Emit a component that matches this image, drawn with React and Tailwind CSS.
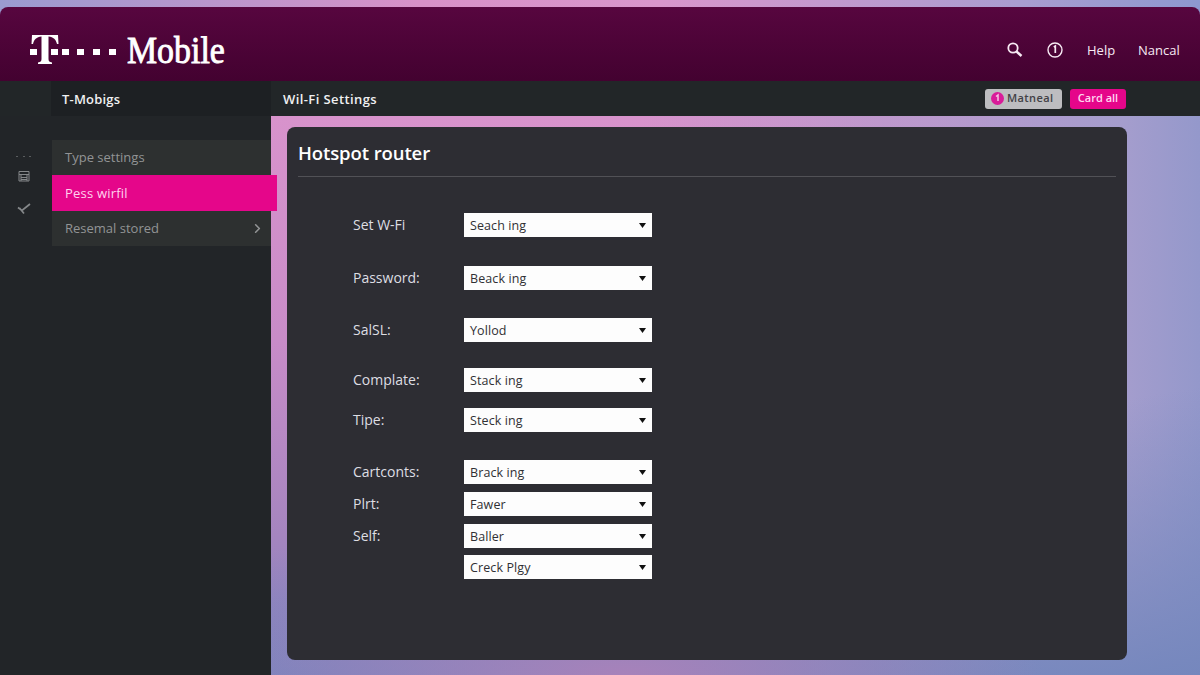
import { ChevronRight } from "lucide-react";

const navItems = [
  { label: "Type settings" },
  { label: "Pess wirfil", active: true },
  { label: "Resemal stored", arrow: true },
];

const fields = [
  { label: "Set W-Fi", value: "Seach ing", gap: "mt-0" },
  { label: "Password:", value: "Beack ing", gap: "mt-[29px]" },
  { label: "SalSL:", value: "Yollod", gap: "mt-7" },
  { label: "Complate:", value: "Stack ing", gap: "mt-[26px]" },
  { label: "Tipe:", value: "Steck ing", gap: "mt-4" },
  { label: "Cartconts:", value: "Brack ing", gap: "mt-7" },
  { label: "Plrt:", value: "Fawer", gap: "mt-2" },
  { label: "Self:", value: "Baller", gap: "mt-2" },
  { label: "", value: "Creck Plgy", gap: "mt-[7px]" },
];

function Logo() {
  return (
    <div className="flex items-center text-white">
      <svg width="88" height="30" viewBox="0 0 88 30" fill="currentColor">
        <path d="M2 0H28L28.500 9H27C26 4.500 23.500 2 18.500 1.500V24C18.500 26.500 19.500 27 22 27.500V29H8V27.500C10.500 27 11.500 26.500 11.500 24V1.500C6.500 2 4 4.500 3 9H1.500Z" />
        <path d="M0 14h7v6H0zM21 14h7v6h-7zM32 14h7v6h-7zM47 14h7v6h-7zM63 14h7v6h-7zM79 14h7v6h-7z" />
      </svg>
      <span className="ml-[9px] origin-left scale-x-[0.88] font-['Liberation_Serif',serif] text-[38.5px] leading-[50px] [-webkit-text-stroke:0.9px_white]">Mobile</span>
    </div>
  );
}

function Header() {
  return (
    <header className="h-[74px] shrink-0 rounded-t-lg bg-gradient-to-b from-[#57063f] to-[#430230] flex items-center justify-between pl-[30px] pr-[19px] pt-3">
      <Logo />
      <div className="flex items-center text-[#f7eaf3] text-[13px] font-medium">
        <svg width="16" height="16" viewBox="0 0 16 16" fill="none" stroke="currentColor" className="mr-6">
          <circle cx="6" cy="6" r="4.700" strokeWidth="1.800" />
          <path d="M9.500 9.500L14.500 14" strokeWidth="2.400" />
        </svg>
        <svg width="16" height="16" viewBox="0 0 16 16" fill="none" stroke="currentColor" strokeWidth="1.400" className="mr-6">
          <circle cx="8" cy="8" r="7" />
          <path d="M6.800 5L8.300 4V11" strokeWidth="1.700" />
        </svg>
        <span className="w-[51px] pt-0.5">Help</span>
        <span className="w-[43px] pt-0.5">Nancal</span>
      </div>
    </header>
  );
}

function Sidebar() {
  return (
    <aside className="w-[271px] shrink-0 flex bg-[#222528]">
      <div className="w-[52px] shrink-0 pt-10 flex flex-col items-center text-[#85888a]">
        <svg width="16" height="2" viewBox="0 0 16 2" className="-ml-1 fill-[#5a5d5f]">
          <path d="M0 0h2v1H0zM7 0h2v1H7zM13 0h2v1h-2z" />
        </svg>
        <svg width="12" height="12" viewBox="0 0 12 12" fill="none" stroke="currentColor" className="mt-3 -ml-1">
          <path d="M1 1.500H11V11H1ZM1 4.500H11M3 7.500H9M3 4.500V11M9 4.500V11M3 9.500H9" />
        </svg>
        <svg width="14" height="12" viewBox="0 0 14 12" fill="none" stroke="currentColor" strokeWidth="1.700" className="mt-[21px] -ml-1">
          <path d="M1 4.500L5 7.500L13 1M2.500 5L7 10.500" />
        </svg>
      </div>
      <nav className="w-[219px] pt-6">
        {navItems.map((item) => (
          <div
            key={item.label}
            className={item.active
              ? "relative z-10 h-9 w-[225px] bg-[#e5068a] text-[#ffd3ee] flex items-center pt-0.5 px-[13px] text-[13px] font-medium tracking-[0.2px]"
              : "h-[35px] bg-[#2d3030] text-[#929495] flex items-center justify-between pl-[13px] pr-1.5 text-[13px]"}
          >
            <span>{item.label}</span>
            {item.arrow && <ChevronRight className="w-[15px] h-[15px]" strokeWidth={2.5} />}
          </div>
        ))}
      </nav>
    </aside>
  );
}

function SelectBox({ value }) {
  return (
    <button className="w-[188px] h-6 bg-[#fdfdfd] text-[#303034] flex items-center justify-between px-1.5 text-[12.5px] tracking-[0.1px]">
      <span className="pt-0.5">{value}</span>
      <svg width="7" height="5" viewBox="0 0 7 5" className="fill-[#111]">
        <path d="M0 0H7L3.500 5Z" />
      </svg>
    </button>
  );
}

export default function App() {
  return (
    <div className="w-[1200px] h-[675px] overflow-hidden flex flex-col pt-[7px] bg-[linear-gradient(90deg,#9a9bd0_0%,#d891c8_35%,#d996cc_55%,#a99dd0_85%,#8d98cf_100%)] font-['Open_Sans',sans-serif]">
      <Header />
      <div className="h-[35px] shrink-0 flex items-center bg-[#222628] text-[13px] font-semibold text-[#f0f0f1]">
        <div className="ml-[51px] w-[220px] h-full bg-[#1d2023] flex items-center pl-[11px] pt-0.5 tracking-[0.2px]">T-Mobigs</div>
        <div className="pl-3 pt-0.5 flex-1 tracking-[0.4px]">Wil-Fi Settings</div>
        <div className="flex gap-2 pr-[74px] text-[11px]">
          <button className="w-[77px] h-5 rounded-[3px] bg-[#bdbdc0] text-[#424146] flex items-center pl-1.5 gap-[3px] tracking-[0.4px]">
            <svg width="13" height="13" viewBox="0 0 13 13" fill="none">
              <circle cx="6.500" cy="6.500" r="6.500" fill="#d91c99" />
              <path d="M5 4.500L7 3V9" stroke="#f6c4e4" strokeWidth="1.500" />
            </svg>
            Matneal
          </button>
          <button className="w-14 h-5 rounded-[3px] bg-[#e5068a] text-[#ffd9f0]">Card all</button>
        </div>
      </div>
      <div className="flex-1 min-h-0 flex">
        <Sidebar />
        <main className="flex-1 pl-4 pt-[11px] bg-[radial-gradient(ellipse_420px_130px_at_38%_100%,#a782ba,transparent),linear-gradient(170deg,transparent_60%,#7587bd_100%),linear-gradient(to_right,transparent_40%,#a49dcd_92%,#9498cb_100%),linear-gradient(to_bottom,#d893cc_0%,#c88cc8_40%,#a585bf_75%,#7f82bd_100%)]">
          <section className="w-[840px] h-[533px] rounded-lg bg-[#2d2d33] px-[11px]">
            <h1 className="h-[50px] border-b border-[#515156] text-[18.5px] leading-[51px] font-semibold tracking-[-0.1px] text-white">Hotspot router</h1>
            <div className="pl-[55px] pt-9">
              {fields.map((field) => (
                <div key={field.value + field.label} className={`flex items-center ${field.gap}`}>
                  <label className="w-[111px] text-sm leading-6 font-medium text-[#dedee3]">{field.label}</label>
                  <SelectBox value={field.value} />
                </div>
              ))}
            </div>
          </section>
        </main>
      </div>
    </div>
  );
}
